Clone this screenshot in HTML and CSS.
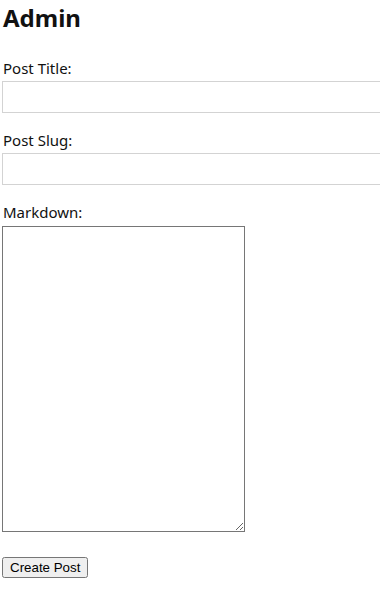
FILE: index.html
```html
<!DOCTYPE html>
<html lang="en">
<head>
<meta charset="utf-8">
<title>Admin</title>
<link rel="stylesheet" href="styles.css">
</head>
<body>
<main class="page">
  <h1 class="title">Admin</h1>
  <form class="form">
    <div class="field">
      <label class="label" for="t">Post Title:</label>
      <input class="text-input" id="t" type="text">
    </div>
    <div class="field">
      <label class="label" for="s">Post Slug:</label>
      <input class="text-input" id="s" type="text">
    </div>
    <div class="field">
      <label class="label label-area" for="m">Markdown:</label>
      <textarea class="markdown" id="m"></textarea>
    </div>
    <div class="actions">
      <button class="submit" type="button">Create Post</button>
    </div>
  </form>
</main>
</body>
</html>
```
FILE: styles.css
```css
html, body {
  margin: 0;
  padding: 0;
  background: #fff;
  overflow: hidden;
}
body {
  font-family: "Segoe UI", "Noto Sans", "Open Sans", sans-serif;
  color: #111;
}
.page {
  padding: 2px 0 0 2px;
}
.title {
  margin: 0;
  font-size: 24px;
  line-height: 32px;
  font-weight: 700;
  padding-left: 1px;
}
.form {
  margin-top: 24px;
  display: flex;
  flex-direction: column;
}
.field {
  display: flex;
  flex-direction: column;
  margin-bottom: 17px;
}
.label {
  font-size: 15px;
  line-height: 21px;
  padding-left: 1px;
  margin-bottom: 2px;
}
.label-area {
  margin-bottom: 3px;
}
.text-input {
  width: 100%;
  height: 32px;
  box-sizing: border-box;
  border: 1px solid #d3d3d3;
  border-right: none;
  margin: 0;
  padding: 0 4px;
  font-size: 15px;
}
.markdown {
  width: 243px;
  height: 306px;
  box-sizing: border-box;
  border: 1px solid #767676;
  margin: 0;
  padding: 2px;
  resize: both;
}
.actions {
  display: flex;
  margin-top: 8px;
}
.submit {
  font-family: "Liberation Sans", Arial, sans-serif;
  font-size: 13.33px;
  margin: 0;
  height: 21px;
  padding: 1px 6px;
}
```
